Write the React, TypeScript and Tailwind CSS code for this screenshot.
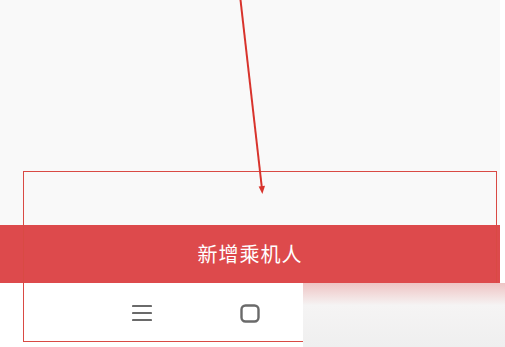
import React from "react";

function MenuIcon() {
  return (
    <svg width="20" height="18" viewBox="0 0 20 18" fill="none">
      <path d="M1 2h18M1 9h18M1 16h18" stroke="#6a6a6a" strokeWidth="2.2" strokeLinecap="round" />
    </svg>
  );
}

function HomeIcon() {
  return (
    <svg width="20" height="19" viewBox="0 0 20 19" fill="none">
      <rect x="1.5" y="1.5" width="17" height="16" rx="4" stroke="#6a6a6a" strokeWidth="2.4" />
    </svg>
  );
}

export default function App() {
  return (
    <div
      className="relative w-[505px] h-[347px] overflow-hidden bg-white flex flex-col"
      style={{ fontFamily: '"Noto Sans CJK SC", "Noto Sans", sans-serif' }}
    >
      {/* page */}
      <div className="flex h-[225px]">
        <div className="w-[500px] bg-[#f9f9f9]" />
        <div className="flex-1 bg-white" />
      </div>

      {/* button */}
      <div className="flex h-[58px]">
        <div className="w-[500px] bg-[#dd4a4c] flex items-center justify-center">
          <span className="text-[20px] tracking-[1px] text-white">新增乘机人</span>
        </div>
        <div className="flex-1 bg-white" />
      </div>

      {/* nav bar */}
      <div className="flex flex-1">
        <div className="w-[303px] bg-white flex items-center pb-[4px]">
          <div className="ml-[132px]">
            <MenuIcon />
          </div>
          <div className="ml-[88px]">
            <HomeIcon />
          </div>
        </div>
        <div className="relative z-10 flex-1 bg-gradient-to-b from-[#eec4c4] via-[#f5f4f4] via-35% to-[#efefef]" />
      </div>

      {/* annotation box */}
      <div className="absolute left-[23px] top-[171px] w-[474px] h-[171px] border border-[#d94a44]" />

      {/* annotation arrow */}
      <svg className="absolute left-0 top-0" width="505" height="347" viewBox="0 0 505 347">
        <line x1="240.5" y1="0" x2="262" y2="189" stroke="#d8332c" strokeWidth="2" />
        <path d="M258.6 186.5 L262.4 194 L265 185.7 Z" fill="#d8332c" />
      </svg>
    </div>
  );
}
